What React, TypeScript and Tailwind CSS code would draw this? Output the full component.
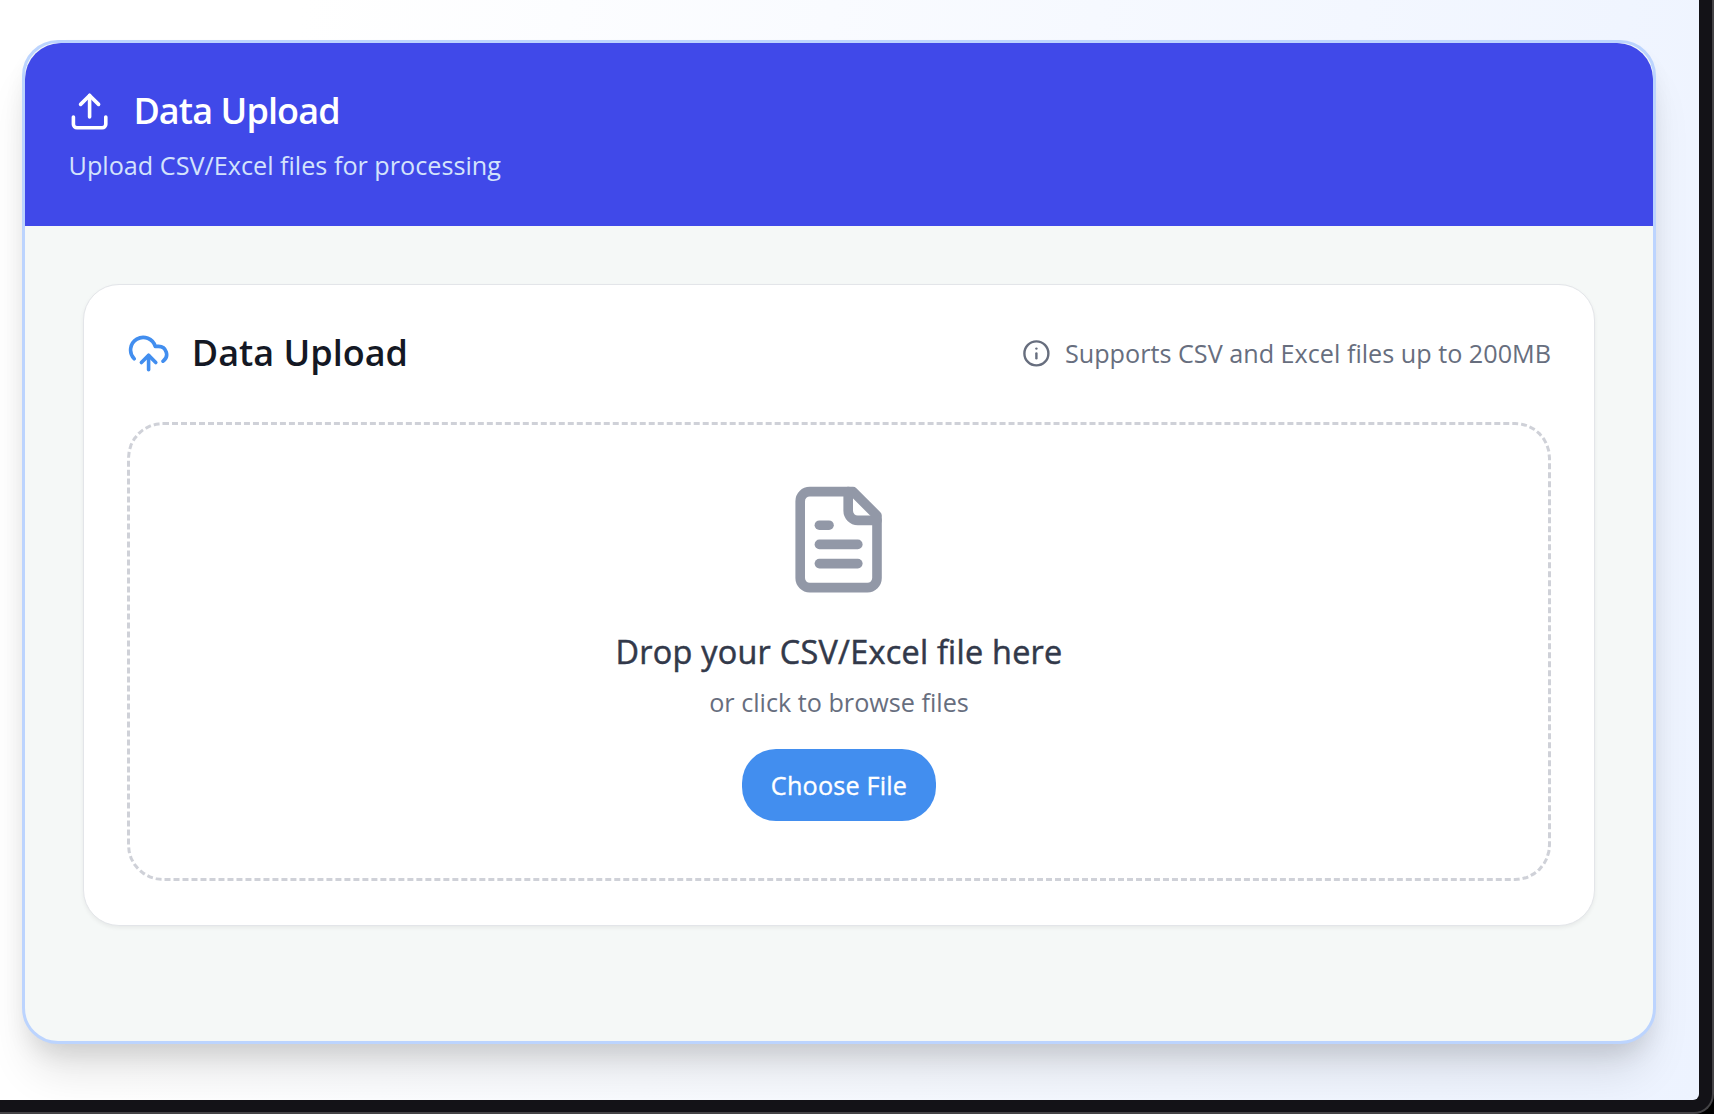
import type { ReactNode } from "react";

function Icon({ className, children }: { className: string; children: ReactNode }) {
  return (
    <svg
      viewBox="0 0 24 24"
      fill="none"
      stroke="currentColor"
      strokeWidth={2}
      strokeLinecap="round"
      strokeLinejoin="round"
      className={className}
    >
      {children}
    </svg>
  );
}

function PanelHeader() {
  return (
    <header className="flex h-[183px] shrink-0 flex-col gap-[10.8px] rounded-t-[36px] bg-[#4049e9] px-[43.2px] pt-[43.2px]">
      <h1 className="flex items-center gap-[22px] text-[36px] leading-[50.4px] font-semibold tracking-tight text-white">
        <Icon className="size-[43.2px] shrink-0">
          <path d="M21 15v4a2 2 0 0 1-2 2H5a2 2 0 0 1-2-2v-4" />
          <path d="m17 8-5-5-5 5" />
          <path d="M12 3v12" />
        </Icon>
        Data Upload
      </h1>
      <p className="pl-[0.4px] text-[25.2px] leading-[36px] text-[#d3e3fc]">Upload CSV/Excel files for processing</p>
    </header>
  );
}

function DropZone() {
  return (
    <div className="mt-[43.2px] flex h-[459px] flex-col items-center rounded-[36px] border-3 border-dashed border-[#cfd1d8] pt-[57.2px]">
      <Icon className="size-[115.2px] shrink-0 text-[#9298a7]">
        <path d="M15 2H6a2 2 0 0 0-2 2v16a2 2 0 0 0 2 2h12a2 2 0 0 0 2-2V7Z" />
        <path d="M14 2v4a2 2 0 0 0 2 2h4" />
        <path d="M10 9H8" />
        <path d="M16 13H8" />
        <path d="M16 17H8" />
      </Icon>
      <p className="mt-[29.2px] text-[32.4px] leading-[50.4px] font-medium tracking-[0.27px] text-[#32394a] [-webkit-text-stroke:0.5px_#32394a] [font-feature-settings:'liga'_1]">
        Drop your CSV/Excel file here
      </p>
      <p className="mt-[6.8px] text-[25.2px] leading-[36px] text-[#676e7e]">or click to browse files</p>
      <button className="mt-[29.4px] h-[72px] w-[194px] rounded-[34px] bg-[#428eef] text-[25.2px] leading-[36px] font-medium tracking-[0.2px] text-white [-webkit-text-stroke:0.35px_#ffffff]">
        Choose File
      </button>
    </div>
  );
}

function UploadCard() {
  return (
    <section className="h-[642px] rounded-[36px] border border-[#e3e5e9] bg-white px-[43px] pt-[43.2px] shadow-[0_2px_4px_rgba(0,0,0,0.06)]">
      <div className="flex items-center justify-between">
        <h2 className="flex items-center gap-[21.6px] text-[36px] leading-[50.4px] font-semibold text-[#141824]">
          <Icon className="size-[43.2px] shrink-0 text-[#428eef]">
            <path d="M12 13v8" />
            <path d="M4 14.899A7 7 0 1 1 15.71 8h1.79a4.5 4.5 0 0 1 2.5 8.242" />
            <path d="m8 17 4-4 4 4" />
          </Icon>
          Data Upload
        </h2>
        <div className="flex items-center gap-[14.4px] text-[25.2px] leading-[36px] text-[#676e7e]">
          <Icon className="size-[28.8px] shrink-0">
            <circle cx="12" cy="12" r="10" />
            <path d="M12 16v-4" />
            <path d="M12 8h.01" />
          </Icon>
          Supports CSV and Excel files up to 200MB
        </div>
      </div>
      <DropZone />
    </section>
  );
}

export default function App() {
  return (
    <div className="h-[1114px] w-[1714px] overflow-hidden bg-black font-['Open_Sans',sans-serif]">
      <div className="h-full w-full rounded-br-[20px] border-r-2 border-b-2 border-[#444346] bg-[#131217] pr-[13px] pb-[12px]">
        <div className="h-full overflow-hidden rounded-br-[6px] bg-[linear-gradient(100deg,#ffffff_16%,#edf3ff_100%)] pt-[40px] pr-[43px] pl-[22px]">
          <main className="flex h-[1004px] flex-col overflow-hidden rounded-[36px] border-3 border-[#bcd4fe] bg-[#f5f8f7] shadow-[0_36px_45px_-9px_rgba(0,0,0,0.11),0_14.4px_26px_-8px_rgba(0,0,0,0.12)]">
            <PanelHeader />
            <div className="px-[58px] pt-[58px]">
              <UploadCard />
            </div>
          </main>
        </div>
      </div>
    </div>
  );
}
